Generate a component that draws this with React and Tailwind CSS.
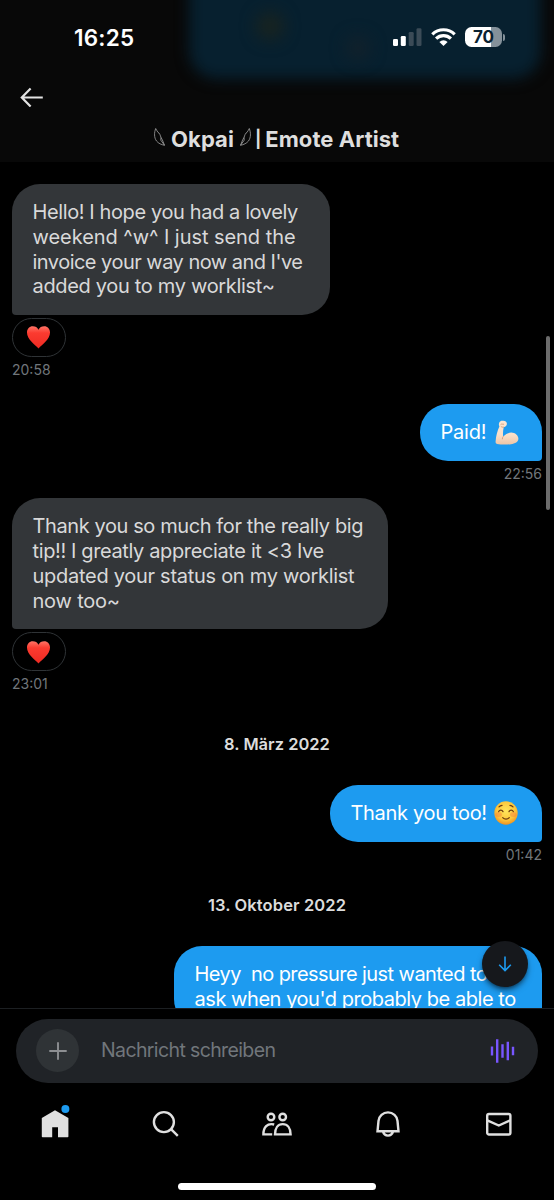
import React from 'react';

const Heart = () => (
    <svg width="25" height="24" viewBox="0 0 26 25">
        <defs>
            <linearGradient id="heart" x1="0" y1="0" x2="0" y2="1">
                <stop offset="0" stopColor="#ff7466" />
                <stop offset="0.3" stopColor="#fb3b30" />
                <stop offset="1" stopColor="#ee2a22" />
            </linearGradient>
        </defs>
        <path d="M13 24.500C9.800 20.700 1 15.300 1 7.800C1 4 3.600 1.300 7 1.300c2.700 0 4.900 1.200 6 3.600c1.100-2.400 3.300-3.600 6-3.600c3.400 0 6 2.700 6 6.500C25 15.300 16.200 20.700 13 24.500z" fill="url(#heart)" />
    </svg>
);

const Biceps = () => (
    <svg width="24" height="25" viewBox="0 0 24 25" className="shrink-0">
        <defs>
            <linearGradient id="skin" x1="0" y1="0" x2="0" y2="1">
                <stop offset="0" stopColor="#fbe6d3" />
                <stop offset="0.6" stopColor="#fadfc8" />
                <stop offset="1" stopColor="#edc5a6" />
            </linearGradient>
        </defs>
        <path d="M4.300 2.500C5 .9 6.700.3 8.300.8c2 .1 3.700 1.200 3.600 3c0 1.900-1.300 3.100-3.200 3.400c-.6 3-1 6.200-.5 9.300c2.300-2.200 4.900-3.900 8-3.900c3.900 0 7.200 3 7.200 6.200c0 3.100-3.300 4.900-7.400 5.400C11.500 24.800 6 24.700 2 24C.8 23.700.5 22.700.6 21.400C1 15.800 2.400 10.800 4.400 6.500C3.700 5.100 3.700 3.700 4.300 2.500z" fill="url(#skin)" />
        <path d="M6 4.200c1-.6 1.800.4 2.700.1M8.600 7.200c-1 .2-1.900-.1-2.500-.7M8.200 16.500c-.6.700-.9 1.500-.9 2.400" stroke="#cf9a78" strokeWidth="0.900" fill="none" strokeLinecap="round" />
    </svg>
);

const Smile = () => (
    <svg width="24" height="24" viewBox="0 0 24 24" className="shrink-0">
        <defs>
            <radialGradient id="face" cx="0.5" cy="0.4" r="0.6">
                <stop offset="0" stopColor="#ffe65c" />
                <stop offset="0.65" stopColor="#fdc83c" />
                <stop offset="1" stopColor="#ef9221" />
            </radialGradient>
        </defs>
        <circle cx="12" cy="12" r="11.700" fill="url(#face)" />
        <ellipse cx="4.700" cy="13.500" rx="3.300" ry="2.500" fill="#f5683c" opacity="0.350" />
        <ellipse cx="19.300" cy="13.500" rx="3.300" ry="2.500" fill="#f5683c" opacity="0.350" />
        <path d="M4.700 10.600c.9-1.900 3.300-1.900 4.300 0M15 10.600c1-1.900 3.400-1.900 4.300 0M8.700 16.600c1.800 2 4.800 2 6.600 0M5 5.900c.8-.9 1.800-1.400 3-1.500M19 5.900c-.8-.9-1.800-1.400-3-1.500" stroke="#6d3a10" strokeWidth="1.200" fill="none" strokeLinecap="round" />
    </svg>
);

const Feather = ({ flip }) => (
    <svg width="11" height="18" viewBox="0 0 11 18" className={flip ? '-scale-x-100' : ''} fill="none" stroke="#a5a5a5" strokeWidth="0.800">
        <path d="M1.700.5C.2 4.500-.1 9.500 2.500 13c2 2.400 4.800 3.700 8 4.300C9.300 14.500 8.700 12 7 9.500C6.300 7.500 5.600 4.800 4 4.400C3.200 3.300 2.500 2 1.700.5zM7 9.500l-.2 2.700l3.700 5.100" />
    </svg>
);

function StatusBar() {
    return (
        <div className="relative flex h-[74px] items-center justify-between pl-[74px] pr-[49px]">
            <span className="pt-0.5 text-[22.500px] leading-none font-semibold tracking-[0.2px] text-white">16:25</span>
            <div className="flex items-center">
                <svg width="29" height="18" viewBox="0 0 29 18">
                    <rect x="0" y="11" width="5" height="7" rx="1.300" fill="#fff" />
                    <rect x="7.800" y="8" width="5" height="10" rx="1.300" fill="#fff" />
                    <rect x="15.700" y="4" width="5" height="14" rx="1.300" fill="#3b4b57" />
                    <rect x="23.500" y="0.300" width="5" height="17.700" rx="1.300" fill="#3b4b57" />
                </svg>
                <svg width="25" height="18" viewBox="0 0 25 18" className="ml-[9px]" fill="none" stroke="#fff" strokeWidth="3.200">
                    <path d="M1.300 6.300a16 16 0 0 1 22.400 0" />
                    <path d="M5.100 10.600a10.600 10.600 0 0 1 14.800 0" />
                    <path d="M12.500 17.900L8.400 13.900a6 6 0 0 1 8.200 0z" fill="#fff" stroke="none" />
                </svg>
                <div className="ml-[9px] flex items-center gap-px">
                    <div className="flex h-5 w-[37px] items-center justify-center rounded-[6.500px] bg-linear-to-r from-white from-70% to-[#84919a] to-70% text-[17px] leading-none font-bold text-[#0b2231]">70</div>
                    <div className="h-[7px] w-[2px] rounded-r-full bg-[#84919a]"></div>
                </div>
            </div>
        </div>
    );
}

function Header() {
    return (
        <header className="relative h-[162px] shrink-0 overflow-hidden bg-[#080808]">
            {/* message scrolled under the translucent bar */}
            <div className="absolute -top-10 left-[189px] h-[119px] w-[352px] rounded-[28px] bg-[#07202f] blur-[7px]"></div>
            <div className="absolute top-[12px] left-[256px] h-7 w-7 rounded-full bg-[#182320] blur-[8px]"></div>
            <div className="absolute top-[36px] left-[346px] h-6 w-6 rounded-full bg-[#12212b] blur-[8px]"></div>
            <StatusBar />
            <div className="relative flex h-[46px] items-center pl-5">
                <svg width="24" height="20" viewBox="0 0 24 20" fill="none" stroke="#e3e3e3" strokeWidth="2.200">
                    <path d="M22.800 10.500H2M10.600 1.500L1.800 10.500l8.800 9" />
                </svg>
            </div>
            <h1 className="relative flex h-[38px] items-center pl-[154px] text-[22px] leading-none font-bold text-[#dedede]">
                <span className="-mt-1"><Feather /></span>
                <span className="ml-1.5 w-[63px] tracking-[0.1px]">Okpai</span>
                <span className="-mt-1 ml-1.5"><Feather flip /></span>
                <span className="ml-1 text-[17px] font-bold">|</span>
                <span className="ml-1 whitespace-nowrap tracking-[0.05px]">Emote Artist</span>
            </h1>
        </header>
    );
}

function Incoming({ children, time, className = '' }) {
    return (
        <div className={`flex flex-col items-start ${className}`}>
            <div className="rounded-[28px] rounded-bl-[4px] bg-[#333639] px-[20.500px] py-4 text-[#d9d9d9]">{children}</div>
            <div className="mt-[3px] flex h-[38.500px] w-[54px] items-center justify-center rounded-full border-[1.500px] border-[#2f3336] pr-px">
                <Heart />
            </div>
            <time className="mt-px h-6 text-[14px] leading-6 text-[#71767b]">{time}</time>
        </div>
    );
}

function Outgoing({ children, time, className = '' }) {
    return (
        <div className={`flex flex-col items-end ${className}`}>
            <div className="rounded-[28px] rounded-br-[4px] bg-[#1d9bf0] px-[20.500px] py-4 text-white">{children}</div>
            {time && <time className="mt-px h-6 text-[14px] leading-6 text-[#71767b]">{time}</time>}
        </div>
    );
}

const DateLabel = ({ children, className }) => (
    <div className={`h-6 text-center text-[16.500px] leading-6 font-semibold text-[#dcdcdc] ${className}`}>{children}</div>
);

function Messages() {
    return (
        <main className="relative h-[846px] shrink-0 overflow-hidden px-3 pt-[22px] text-[20px] leading-[24.800px] whitespace-pre">
            <Incoming time="20:58">
                <p className="w-[277px] tracking-[-0.390px]">Hello! I hope you had a lovely</p>
                <p className="tracking-[-0.050px]">weekend ^w^ I just send the</p>
                <p className="tracking-[-0.520px]">invoice your way now and I've</p>
                <p className="tracking-[-0.320px]">added you to my worklist~</p>
            </Incoming>
            <Outgoing time="22:56" className="mt-[22.300px]">
                <div className="flex h-[24.800px] w-[81px] items-center justify-between pr-[3px]">
                    <span className="tracking-[-0.2px]">Paid!</span>
                    <Biceps />
                </div>
            </Outgoing>
            <Incoming time="23:01" className="mt-[12.500px]">
                <p className="w-[335px] tracking-[-0.400px]">Thank you so much for the really big</p>
                <p className="tracking-[-0.370px]">tip!! I greatly appreciate it &lt;3 Ive</p>
                <p className="tracking-[-0.280px]">updated your status on my worklist</p>
                <p className="tracking-[-0.2px]">now too~</p>
            </Incoming>
            <DateLabel className="mt-[36px]">8. März 2022</DateLabel>
            <Outgoing time="01:42" className="mt-[29px]">
                <div className="flex h-[24.800px] w-[171px] items-center justify-between pr-1">
                    <span className="tracking-[-0.320px]">Thank you too!</span>
                    <Smile />
                </div>
            </Outgoing>
            <DateLabel className="mt-[26px] tracking-[0.1px]">13. Oktober 2022</DateLabel>
            <Outgoing className="mt-[29px]">
                <p className="w-[327px] tracking-[-0.570px]">Heyy  no pressure just wanted to</p>
                <p className="tracking-[-0.450px]">ask when you'd probably be able to</p>
            </Outgoing>

            {/* scroll indicator */}
            <div className="absolute top-[174px] right-[4px] h-[174px] w-1 rounded-full bg-[#6c6c6c]"></div>
            <button className="absolute right-[26px] bottom-[21px] flex h-[46px] w-[46px] items-center justify-center rounded-full bg-[#16181c] shadow-md shadow-black/50">
                <svg width="14" height="16" viewBox="0 0 14 16" fill="none" stroke="#1d9bf0" strokeWidth="1.600">
                    <path d="M7 0.500V14.500M1.200 8.800L7 14.600l5.800-5.800" />
                </svg>
            </button>
        </main>
    );
}

function Composer() {
    return (
        <div className="flex h-[75px] shrink-0 items-start border-t border-[#1c1f22] px-4 pt-[9.500px]">
            <div className="flex h-16 w-full items-center rounded-full bg-[#202327] pr-[23px] pl-5">
                <button className="flex h-[43px] w-[43px] items-center justify-center rounded-full bg-[#2f3336]">
                    <svg width="18" height="18" viewBox="0 0 18 18" stroke="#8d8f92" strokeWidth="1.900">
                        <path d="M9 0.300V17.700M0.300 9H17.700" />
                    </svg>
                </button>
                <span className="ml-[22px] flex-1 pt-px text-[19.500px] tracking-[-0.620px] text-[#71767b]">Nachricht schreiben</span>
                <svg width="25" height="24" viewBox="0 0 25 24" stroke="#7856ff" strokeWidth="2.400">
                    <path d="M2 7.500v9M7.200 0.200v23.600M12.500 5.300v13.400M17.800 2.700v18.600M23 7.700v8.600" />
                </svg>
            </div>
        </div>
    );
}

const NavIcon = ({ children }) => (
    <button className="flex flex-1 items-center justify-center">
        <svg width="32" height="32" viewBox="0 0 32 32" fill="none" stroke="#e0e0e0" strokeWidth="2.400" className="overflow-visible">{children}</svg>
    </button>
);

function BottomNav() {
    return (
        <nav className="flex h-[82px] shrink-0">
            <NavIcon>
                <path d="M16 2.200L29.400 10v18.400a.8.800 0 0 1-.8.800H19V19.300h-5.800v9.900H3.600a.8.800 0 0 1-.8-.8V10z" fill="#e0e0e0" stroke="none" />
                <circle cx="26.400" cy="0.900" r="4" fill="#1d9bf0" stroke="none" />
            </NavIcon>
            <NavIcon>
                <circle cx="13.900" cy="14.100" r="10" />
                <path d="M21 21.100L27.800 27.900" />
            </NavIcon>
            <NavIcon>
                <circle cx="10" cy="9" r="3.300" />
                <circle cx="21.700" cy="9" r="3.300" />
                <path d="M14 26.400c0-6.200 2.900-10.300 7.700-10.300s7.900 4.100 7.900 10.300zM13.200 16.500C6.200 14.700 2.400 19.300 2.400 26.400H11.200" />
            </NavIcon>
            <NavIcon>
                <path d="M5.500 23.300l1-10.500C6.900 8 11 4.400 16 4.400s9.100 3.600 9.500 8.400l1 10.500zM11 23.700c.7 2.400 2.600 3.900 5 3.900s4.300-1.500 5-3.900" />
            </NavIcon>
            <NavIcon>
                <rect x="4.200" y="6" width="23.200" height="20.500" rx="1.800" />
                <path d="M4.300 12.300L15.800 17.500L27.200 12.300" />
            </NavIcon>
        </nav>
    );
}

export default function App() {
    return (
        <div className="flex h-[1200px] w-[554px] flex-col overflow-hidden bg-black font-['Inter','Liberation_Sans',sans-serif]">
            <Header />
            <Messages />
            <Composer />
            <BottomNav />
            <div className="mx-auto mt-[18px] h-[7px] w-[198px] rounded-full bg-white"></div>
        </div>
    );
}
